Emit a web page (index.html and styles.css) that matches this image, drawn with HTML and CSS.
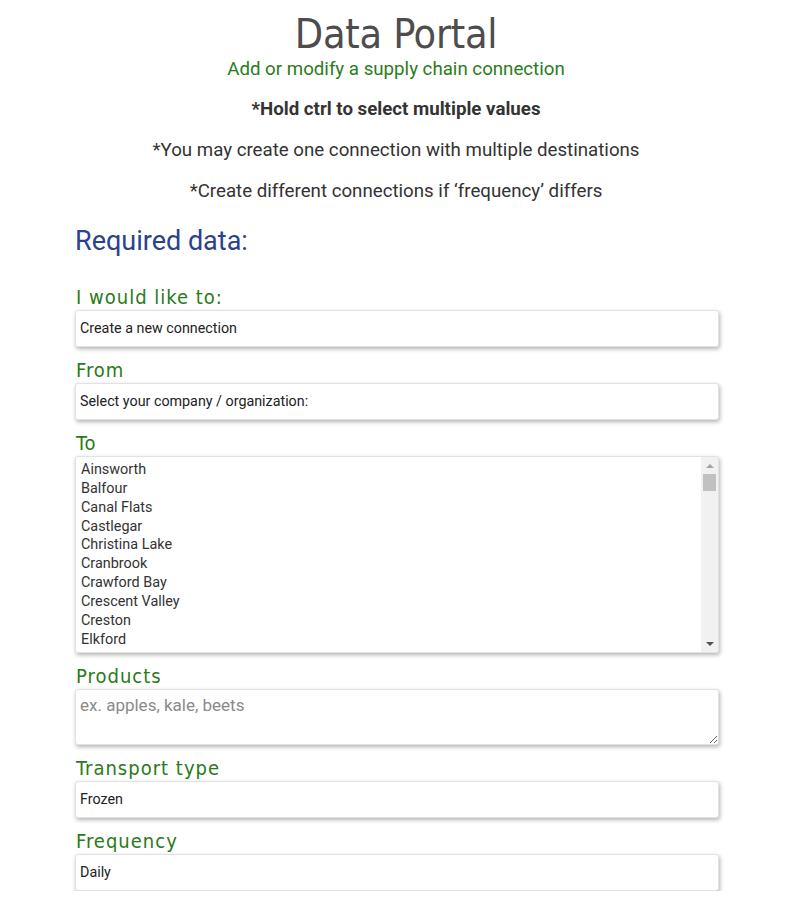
FILE: index.html
```html
<!DOCTYPE html>
<html>
<head>
<meta charset="utf-8">
<link rel="stylesheet" href="styles.css">
</head>
<body>
<header class="head">
  <h1 class="title">Data Portal</h1>
  <p class="subtitle">Add or modify a supply chain connection</p>
  <p class="note note-bold">*Hold ctrl to select multiple values</p>
  <p class="note">*You may create one connection with multiple destinations</p>
  <p class="note">*Create different connections if ‘frequency’ differs</p>
</header>
<main class="form">
  <h2 class="section">Required data:</h2>
  <label class="label">I would like to:</label>
  <select class="field"><option>Create a new connection</option></select>
  <label class="label">From</label>
  <select class="field"><option>Select your company / organization:</option></select>
  <label class="label">To</label>
  <div class="field listbox">
    <select class="list" multiple size="10">
      <option>Ainsworth</option>
      <option>Balfour</option>
      <option>Canal Flats</option>
      <option>Castlegar</option>
      <option>Christina Lake</option>
      <option>Cranbrook</option>
      <option>Crawford Bay</option>
      <option>Crescent Valley</option>
      <option>Creston</option>
      <option>Elkford</option>
      <option>Edgewood</option>
      <option>Fauquier</option>
      <option>Fernie</option>
      <option>Fruitvale</option>
      <option>Golden</option>
      <option>Grand Forks</option>
      <option>Greenwood</option>
      <option>Invermere</option>
      <option>Kaslo</option>
      <option>Kimberley</option>
      <option>Midway</option>
      <option>Montrose</option>
      <option>Nakusp</option>
      <option>Nelson</option>
      <option>New Denver</option>
      <option>Radium Hot Springs</option>
      <option>Revelstoke</option>
      <option>Rossland</option>
      <option>Salmo</option>
      <option>Silverton</option>
      <option>Slocan</option>
      <option>Sparwood</option>
      <option>Trail</option>
      <option>Warfield</option>
    </select>
    <div class="scrollbar" aria-hidden="true">
      <div class="sb-btn"><span class="arrow-up"></span></div>
      <div class="sb-thumb"></div>
      <div class="sb-track"></div>
      <div class="sb-btn"><span class="arrow-down"></span></div>
    </div>
  </div>
  <label class="label">Products</label>
  <textarea class="field area" placeholder="ex. apples, kale, beets"></textarea>
  <label class="label">Transport type</label>
  <select class="field"><option>Frozen</option></select>
  <label class="label">Frequency</label>
  <select class="field"><option>Daily</option></select>
</main>
</body>
</html>
```
FILE: styles.css
```css
html, body {
  margin: 0;
  padding: 0;
  background: #ffffff;
}
body {
  font-family: Roboto, "Liberation Sans", sans-serif;
  color: #333333;
}
.head {
  display: flex;
  flex-direction: column;
  align-items: center;
  padding-top: 10px;
}
.title {
  margin: 0;
  font-family: "DejaVu Sans Condensed", sans-serif;
  font-weight: 400;
  font-size: 41px;
  line-height: 48px;
  letter-spacing: -0.3px;
  color: #4d4d4d;
}
.subtitle {
  margin: 0;
  font-size: 18.7px;
  line-height: 22px;
  color: #2a7d1a;
}
.note {
  margin: 0;
  font-size: 18.7px;
  line-height: 22px;
  color: #333333;
  margin-top: 19px;
}
.note-bold {
  font-weight: 700;
  margin-top: 18px;
}
.form {
  width: 644px;
  margin: 0 auto;
  padding-left: 2px;
  display: flex;
  flex-direction: column;
}
.section {
  margin: 24px 0 0 0;
  font-size: 27px;
  line-height: 30px;
  font-weight: 400;
  color: #2a4290;
}
.label {
  margin-top: 10px;
  padding-left: 1px;
  font-family: "DejaVu Sans Condensed", sans-serif;
  font-size: 20px;
  line-height: 26px;
  letter-spacing: 1px;
  color: #2a7a18;
}
.section + .label {
  margin-top: 28px;
}
.field {
  box-sizing: border-box;
  width: 644px;
  height: 37px;
  margin: 0;
  padding: 0 4px 2px 4px;
  border: 1px solid #e2e2e2;
  border-radius: 3px;
  background: #ffffff;
  box-shadow: 1px 2px 4px rgba(0, 0, 0, 0.3);
  font-family: Roboto, "Liberation Sans", sans-serif;
  font-size: 14.3px;
  color: #222222;
  appearance: none;
  -webkit-appearance: none;
  outline: none;
}
.listbox {
  display: flex;
  height: 197px;
  padding: 0;
  overflow: hidden;
}
.list {
  flex: 1;
  min-width: 0;
  height: 100%;
  margin: 0;
  border: none;
  outline: none;
  padding: 3px 0 0 1px;
  font-family: Roboto, "Liberation Sans", sans-serif;
  font-size: 14.4px;
  color: #333333;
  background: transparent;
  overflow: hidden;
  appearance: none;
  -webkit-appearance: none;
}
.list option {
  padding: 1px 4px 0.6px 4px;
  line-height: 16.8px;
}
.scrollbar {
  width: 17px;
  flex: none;
  display: flex;
  flex-direction: column;
  background: #f1f1f1;
}
.sb-btn {
  height: 17px;
  display: flex;
  align-items: center;
  justify-content: center;
}
.arrow-up {
  width: 0;
  height: 0;
  border-left: 4px solid transparent;
  border-right: 4px solid transparent;
  border-bottom: 4px solid #a3a3a3;
}
.arrow-down {
  width: 0;
  height: 0;
  border-left: 4px solid transparent;
  border-right: 4px solid transparent;
  border-top: 4px solid #505050;
}
.sb-thumb {
  height: 17px;
  margin: 0 2px;
  background: #c1c1c1;
}
.sb-track {
  flex: 1;
}
.area {
  height: 56px;
  padding: 5px 4px;
  font-size: 17px;
  resize: vertical;
}
.area::placeholder {
  color: #8a8a8a;
}
```
